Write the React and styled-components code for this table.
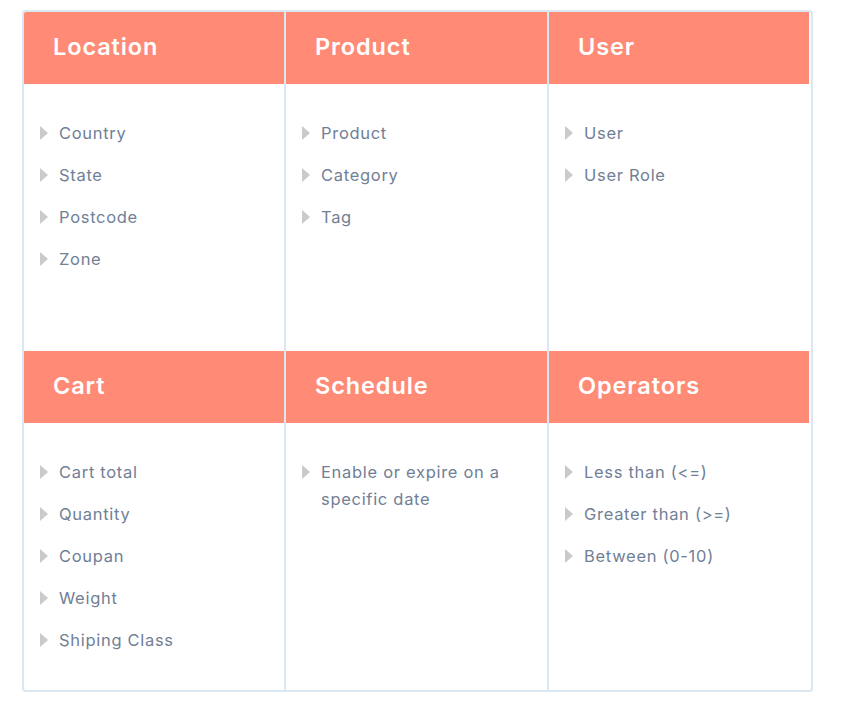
import React from "react";
import styled, { createGlobalStyle } from "styled-components";

const GlobalStyle = createGlobalStyle`
  body {
    margin: 0;
    background: #ffffff;
    font-family: "Inter", "Liberation Sans", sans-serif;
  }
`;

const groups = [
  { title: "Location", items: ["Country", "State", "Postcode", "Zone"] },
  { title: "Product", items: ["Product", "Category", "Tag"] },
  { title: "User", items: ["User", "User Role"] },
  {
    title: "Cart",
    items: ["Cart total", "Quantity", "Coupan", "Weight", "Shiping Class"],
  },
  { title: "Schedule", items: ["Enable or expire on a specific date"] },
  {
    title: "Operators",
    items: ["Less than (<=)", "Greater than (>=)", "Between (0-10)"],
  },
];

const App = () => {
  return (
    <Page>
      <GlobalStyle />
      <Board>
        {groups.map((group, i) => (
          <Cell key={group.title} first={i % 3 === 0}>
            <Header>{group.title}</Header>
            <List>
              {group.items.map((item) => (
                <Item key={item}>
                  <Arrow />
                  <Label>{item}</Label>
                </Item>
              ))}
            </List>
          </Cell>
        ))}
      </Board>
    </Page>
  );
};

const Page = styled.div`
  padding: 10px 0 0 22px;
  width: 791px;
`;

const Board = styled.div`
  display: grid;
  grid-template-columns: 260px 263px 262px;
  border: 2px solid #dbe7f1;
  border-radius: 4px;
  overflow: hidden;
`;

const Cell = styled.div`
  display: flex;
  flex-direction: column;
  height: 339px;
  border-left: ${(p) => (p.first ? "none" : "2px solid #dbe7f1")};
`;

const Header = styled.div`
  display: flex;
  align-items: center;
  height: 72px;
  padding: 0 0 3px 29px;
  box-sizing: border-box;
  background: #ff8a76;
  color: #ffffff;
  font-size: 23.5px;
  font-weight: 600;
  letter-spacing: 0.9px;
`;

const List = styled.ul`
  list-style: none;
  margin: 0;
  padding: 36px 16px 0 16px;
  display: flex;
  flex-direction: column;
  gap: 15px;
`;

const Item = styled.li`
  display: flex;
  align-items: flex-start;
  gap: 11px;
`;

const Arrow = styled.span`
  flex: none;
  width: 0;
  height: 0;
  margin-top: 6px;
  border-top: 7px solid transparent;
  border-bottom: 7px solid transparent;
  border-left: 8px solid #cacaca;
`;

const Label = styled.span`
  max-width: 200px;
  font-size: 16.5px;
  line-height: 27px;
  color: #718096;
  letter-spacing: 0.7px;
`;

export default App;
